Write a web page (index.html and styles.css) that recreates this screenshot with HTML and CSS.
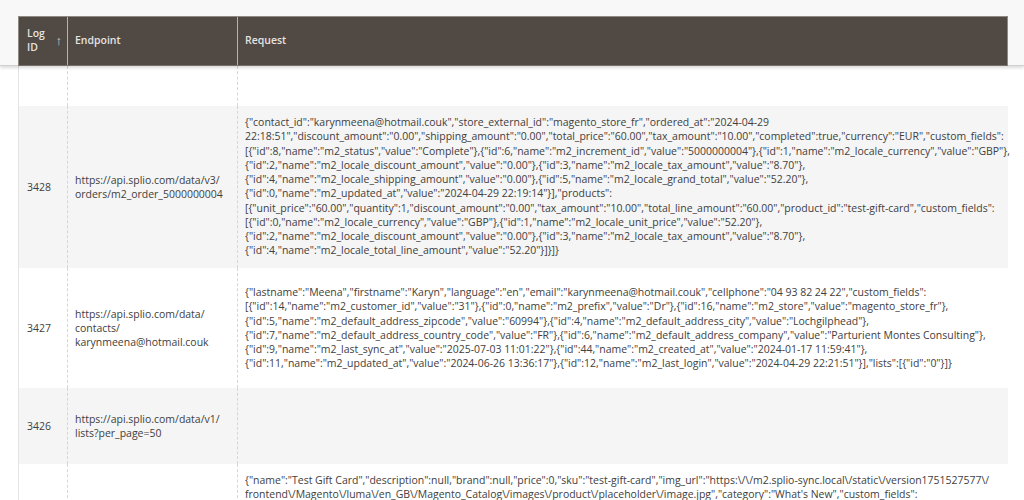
FILE: index.html
```html
<!DOCTYPE html>
<html lang="en">
<head>
<meta charset="utf-8">
<title>Log</title>
<link rel="stylesheet" href="styles.css">
</head>
<body>
<div class="band">
  <div class="head">
    <div class="hcell hid"><span>Log ID</span><span class="arrow">↑</span></div>
    <div class="hcell hep">Endpoint</div>
    <div class="hcell hreq">Request</div>
  </div>
</div>
<div class="rows">
  <div class="row blank"><div class="c cid"></div><div class="c cep"></div><div class="c creq"></div></div>
  <div class="row alt r1">
    <div class="c cid">3428</div>
    <div class="c cep">https://api.splio.com/data/v3/<br>orders/m2_order_5000000004</div>
    <div class="c creq">{"contact_id":"karynmeena@hotmail.couk","store_external_id":"magento_store_fr","ordered_at":"2024-04-29<br>22:18:51","discount_amount":"0.00","shipping_amount":"0.00","total_price":"60.00","tax_amount":"10.00","completed":true,"currency":"EUR","custom_fields":<br>[{"id":8,"name":"m2_status","value":"Complete"},{"id":6,"name":"m2_increment_id","value":"5000000004"},{"id":1,"name":"m2_locale_currency","value":"GBP"},<br>{"id":2,"name":"m2_locale_discount_amount","value":"0.00"},{"id":3,"name":"m2_locale_tax_amount","value":"8.70"},<br>{"id":4,"name":"m2_locale_shipping_amount","value":"0.00"},{"id":5,"name":"m2_locale_grand_total","value":"52.20"},<br>{"id":0,"name":"m2_updated_at","value":"2024-04-29 22:19:14"}],"products":<br>[{"unit_price":"60.00","quantity":1,"discount_amount":"0.00","tax_amount":"10.00","total_line_amount":"60.00","product_id":"test-gift-card","custom_fields":<br>[{"id":0,"name":"m2_locale_currency","value":"GBP"},{"id":1,"name":"m2_locale_unit_price","value":"52.20"},<br>{"id":2,"name":"m2_locale_discount_amount","value":"0.00"},{"id":3,"name":"m2_locale_tax_amount","value":"8.70"},<br>{"id":4,"name":"m2_locale_total_line_amount","value":"52.20"}]}]}</div>
  </div>
  <div class="row r2">
    <div class="c cid">3427</div>
    <div class="c cep">https://api.splio.com/data/<br>contacts/<br>karynmeena@hotmail.couk</div>
    <div class="c creq">{"lastname":"Meena","firstname":"Karyn","language":"en","email":"karynmeena@hotmail.couk","cellphone":"04 93 82 24 22","custom_fields":<br>[{"id":14,"name":"m2_customer_id","value":"31"},{"id":0,"name":"m2_prefix","value":"Dr"},{"id":16,"name":"m2_store","value":"magento_store_fr"},<br>{"id":5,"name":"m2_default_address_zipcode","value":"60994"},{"id":4,"name":"m2_default_address_city","value":"Lochgilphead"},<br>{"id":7,"name":"m2_default_address_country_code","value":"FR"},{"id":6,"name":"m2_default_address_company","value":"Parturient Montes Consulting"},<br>{"id":9,"name":"m2_last_sync_at","value":"2025-07-03 11:01:22"},{"id":44,"name":"m2_created_at","value":"2024-01-17 11:59:41"},<br>{"id":11,"name":"m2_updated_at","value":"2024-06-26 13:36:17"},{"id":12,"name":"m2_last_login","value":"2024-04-29 22:21:51"}],"lists":[{"id":"0"}]}</div>
  </div>
  <div class="row alt r3">
    <div class="c cid">3426</div>
    <div class="c cep">https://api.splio.com/data/v1/<br>lists?per_page=50</div>
    <div class="c creq"></div>
  </div>
  <div class="row r4">
    <div class="c cid"></div>
    <div class="c cep"></div>
    <div class="c creq">{"name":"Test Gift Card","description":null,"brand":null,"price":0,"sku":"test-gift-card","img_url":"https:\/\/m2.splio-sync.local\/static\/version1751527577\/<br>frontend\/Magento\/luma\/en_GB\/Magento_Catalog\/images\/product\/placeholder\/image.jpg","category":"What's New","custom_fields":</div>
  </div>
</div>
</body>
</html>
```
FILE: styles.css
```css
html, body { margin: 0; padding: 0; }
body {
  width: 1024px;
  height: 500px;
  overflow: hidden;
  background: #fff;
  font-family: "Open Sans", sans-serif;
  font-size: 10.48px;
  line-height: 14.27px;
  color: #41403e;
}
.band {
  height: 66px;
  box-sizing: border-box;
  padding: 16px 16px 0 18px;
  background: #f8f8f8;
  border-bottom: 1px solid #d0d0d0;
  box-shadow: 0 2px 3px rgba(0,0,0,.14);
  position: relative;
}
.head {
  display: grid;
  grid-template-columns: 48px 170px 770px;
  height: 50px;
  box-sizing: border-box;
  background: #514943;
  border: 1px solid #8f8984;
  border-bottom-color: #77706a;
  color: #e6e3e1;
  font-weight: 600;
}
.hcell {
  display: flex;
  align-items: center;
  padding: 0 0 2px 7px;
  border-left: 1px solid #b5b1ad;
}
.hid { border-left: 0; padding: 0 5px 2px 8px; justify-content: space-between; }
.hid span:first-child { width: 20px; }
.arrow { font-weight: 400; font-size: 13px; color: #d5d2cf; }
.rows { margin-left: 18px; width: 990px; border-left: 1px solid #e3e3e3; box-sizing: border-box; }
.row { display: grid; grid-template-columns: 48px 170px 771px; }
.alt { background: #f5f5f5; }
.blank { height: 40px; }
.r1 { height: 162px; }
.r2 { height: 120px; }
.r3 { height: 76px; }
.r4 { height: 60px; }
.c {
  display: flex;
  align-items: center;
  box-sizing: border-box;
  padding: 0 7px;
  border-left: 1px dashed #d6d6d6;
  white-space: nowrap;
}
.cid { border-left: 0; padding-left: 8px; }
.creq { display: block; padding-top: 9px; }
.r1 .creq { padding-top: 9px; }
.r2 .creq { padding-top: 17px; }
```
